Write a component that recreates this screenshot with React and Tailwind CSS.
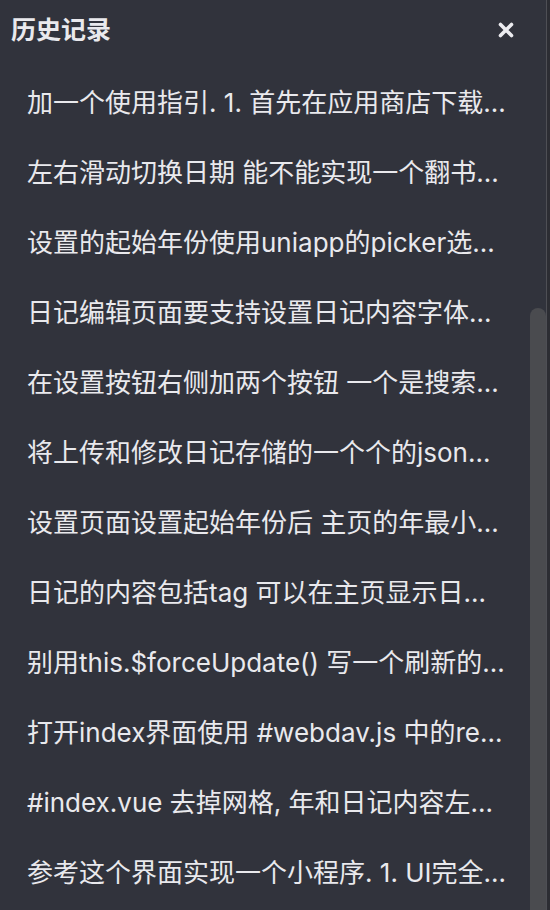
import React from "react";

const items = [
  "加一个使用指引. 1. 首先在应用商店下载...",
  "左右滑动切换日期 能不能实现一个翻书...",
  "设置的起始年份使用uniapp的picker选...",
  "日记编辑页面要支持设置日记内容字体...",
  "在设置按钮右侧加两个按钮 一个是搜索...",
  "将上传和修改日记存储的一个个的json...",
  "设置页面设置起始年份后 主页的年最小...",
  "日记的内容包括tag 可以在主页显示日...",
  "别用this.$forceUpdate() 写一个刷新的...",
  "打开index界面使用 #webdav.js 中的re...",
  "#index.vue 去掉网格, 年和日记内容左...",
  "参考这个界面实现一个小程序. 1. UI完全...",
];

export default function App() {
  return (
    <div
      className="relative w-[550px] h-[910px] overflow-hidden bg-[#31333c] text-[#e9e9ed]"
      style={{ fontFamily: 'Inter, "Noto Sans CJK SC", "Noto Sans", sans-serif' }}
    >
      <div className="flex h-[62px] items-center justify-between pl-[11px] pr-[36px]">
        <div className="text-[25px] font-bold">历史记录</div>
        <svg width="16" height="16" viewBox="0 0 16 16" className="mt-[-2px]">
          <path d="M2.5 2.5 L13.5 13.5 M13.5 2.5 L2.5 13.5" stroke="#ececf0" strokeWidth="3.6" strokeLinecap="round" />
        </svg>
      </div>
      <div className="flex flex-col pt-[6px]">
        {items.map((t, i) => (
          <div key={i} className="flex h-[70px] items-center pl-[27px] pr-[30px]">
            <span className="whitespace-nowrap text-[26px] leading-none">{t}</span>
          </div>
        ))}
      </div>
      <div className="absolute right-0 top-0 h-full w-[4px] border-l border-[#4e4f55] bg-[#2c2d33]" />
      <div className="absolute right-[4px] top-[308px] h-[620px] w-[16px] rounded-t-[8px] bg-[#4a4b4f]" />
    </div>
  );
}
